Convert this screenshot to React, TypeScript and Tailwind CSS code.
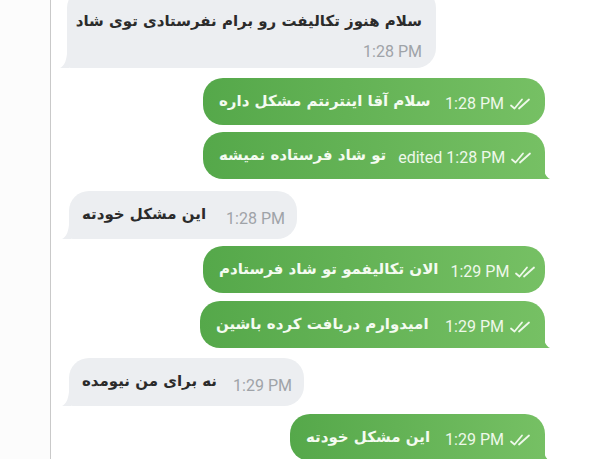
import React from 'react'

function Ticks() {
  return (
    <svg width="24" height="14" viewBox="0 0 24 14" fill="none" className="shrink-0">
      <path d="M2 8.5 L5.5 11.5 L13 2.5" stroke="#eef8ea" strokeWidth="1.8" strokeLinecap="round" strokeLinejoin="round" />
      <path d="M10 11.5 L20 2.5" stroke="#eef8ea" strokeWidth="1.8" strokeLinecap="round" />
    </svg>
  )
}

function TailRight({ color }: { color: string }) {
  return (
    <svg width="10" height="14" viewBox="0 0 10 14" className="absolute -right-[6px] bottom-0">
      <path d="M0 0 L0 14 L9 14 C5 12 3 8 2 0 Z" fill={color} />
    </svg>
  )
}

function TailLeft() {
  return (
    <svg width="10" height="14" viewBox="0 0 10 14" className="absolute -left-[8px] bottom-0">
      <path d="M10 0 L10 14 L1 14 C5 12 7 8 8 0 Z" fill="#eceef1" />
    </svg>
  )
}

interface OutProps {
  text: string
  time: string
  width: string
  tail?: boolean
  gap: string
}

function Outgoing({ text, time, width, tail, gap }: OutProps) {
  return (
    <div className={`self-end mr-[55px] ${gap}`}>
      <div
        className={`relative h-[47px] ${width} flex items-center pl-[16px] pr-[12px] bg-gradient-to-r from-[#55a84a] to-[#76c064] ${
          tail ? 'rounded-[20px] rounded-br-[4px]' : 'rounded-[20px]'
        }`}
      >
        <span dir="rtl" className="font-['DejaVu_Sans',sans-serif] text-[15px] font-semibold text-[#f4fbf1] whitespace-nowrap">
          {text}
        </span>
        <span className="ml-auto pl-3 mt-[6px] font-['Roboto',sans-serif] text-[16px] text-[#eef8ea] whitespace-nowrap">
          {time}
        </span>
        <span className="ml-[5px] mt-[6px]">
          <Ticks />
        </span>
        {tail && <TailRight color="#76c064" />}
      </div>
    </div>
  )
}

interface InProps {
  text: string
  time: string
  width: string
  gap: string
}

function Incoming({ text, time, width, gap }: InProps) {
  return (
    <div className={`self-start ml-[18px] ${gap}`}>
      <div className={`relative h-[48px] ${width} flex items-center pl-[13px] pr-[12px] bg-[#eceef1] rounded-[20px] rounded-bl-[4px]`}>
        <span dir="rtl" className="font-['DejaVu_Sans',sans-serif] text-[15px] font-semibold text-[#2b2b2b] whitespace-nowrap">
          {text}
        </span>
        <span className="ml-auto pl-3 mt-[8px] font-['Roboto',sans-serif] text-[16px] text-[#9fa3a8] whitespace-nowrap">
          {time}
        </span>
        <TailLeft />
      </div>
    </div>
  )
}

export default function App() {
  return (
    <div className="w-[600px] h-[459px] overflow-hidden bg-white flex">
      <div className="w-[51px] shrink-0 border-r border-[#c9c9c9] bg-[#fcfcfc]" />
      <div className="flex-1 flex flex-col">
        <div className="self-start ml-[16px] -mt-[12px]">
          <div className="relative w-[369px] pt-[22px] pb-[4px] pl-[10px] pr-[14px] bg-[#eceef1] rounded-[20px] rounded-bl-[4px] flex flex-col">
            <span dir="rtl" className="self-end font-['DejaVu_Sans',sans-serif] text-[15px] font-semibold text-[#2b2b2b] whitespace-nowrap">
              سلام هنوز تکالیفت رو برام نفرستادی توی شاد
            </span>
            <span className="self-end mt-[7px] font-['Roboto',sans-serif] text-[16px] text-[#9fa3a8]">
              1:28 PM
            </span>
            <TailLeft />
          </div>
        </div>

        <Outgoing gap="mt-[10px]" width="w-[342px]" text="سلام آقا اینترنتم مشکل داره" time="1:28 PM" />
        <Outgoing gap="mt-[7px]" width="w-[342px]" tail text="تو شاد فرستاده نمیشه" time="edited 1:28 PM" />

        <Incoming gap="mt-[12px]" width="w-[228px]" text="این مشکل خودته" time="1:28 PM" />

        <Outgoing gap="mt-[7px]" width="w-[342px]" text="الان تکالیفمو تو شاد فرستادم" time="1:29 PM" />
        <Outgoing gap="mt-[8px]" width="w-[345px]" tail text="امیدوارم دریافت کرده باشین" time="1:29 PM" />

        <Incoming gap="mt-[10px]" width="w-[235px]" text="نه برای من نیومده" time="1:29 PM" />

        <Outgoing gap="mt-[8px]" width="w-[255px]" tail text="این مشکل خودته" time="1:29 PM" />
      </div>
    </div>
  )
}
